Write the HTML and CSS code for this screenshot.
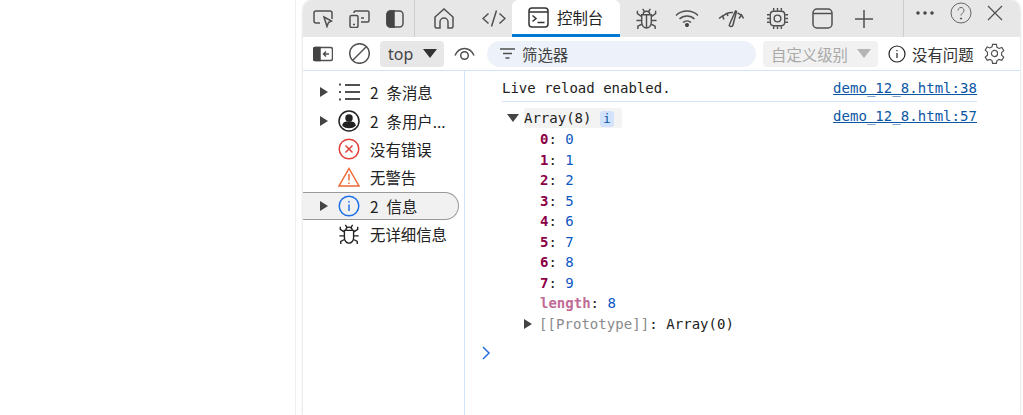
FILE: index.html
```html
<!DOCTYPE html>
<html lang="zh">
<head>
<meta charset="utf-8">
<title>DevTools</title>
<link rel="stylesheet" href="styles.css">
</head>
<body>
<div class="page">
  <aside class="blank"></aside>
  <main class="devtools">
    <header class="tabbar">
      <div class="tabgroup tools">
        <button class="ic"><svg width="20" height="18" viewBox="0 0 20 18"><path d="M7 13H3a2 2 0 0 1-2-2V3a2 2 0 0 1 2-2h14a2 2 0 0 1 2 2v6"/><path d="M11 7l7.500 4-3 1.500-1.500 4z"/></svg></button>
        <button class="ic"><svg width="21" height="18" viewBox="0 0 21 18"><rect x="1" y="5.500" width="8" height="12" rx="1.500"/><path d="M4 14.500h2"/><path d="M5 3V2.500A1.500 1.500 0 0 1 6.500 1h12A1.500 1.500 0 0 1 20 2.500v8a1.500 1.500 0 0 1-1.500 1.500H12M12 8h3"/></svg></button>
        <button class="ic"><svg width="18" height="18" viewBox="0 0 18 18"><rect x="1" y="1" width="16" height="16" rx="3.500"/><path class="solid" d="M4.500 1H8v16H4.500A3.500 3.500 0 0 1 1 13.500v-9A3.500 3.500 0 0 1 4.500 1z"/></svg></button>
      </div>
      <div class="tabgroup tabs">
        <button class="ic home"><svg width="20" height="21" viewBox="0 0 20 21"><path d="M1 9l9-8 9 8v9.500a1.500 1.500 0 0 1-1.500 1.500H14v-6a4 4 0 0 0-8 0v6H2.500A1.500 1.500 0 0 1 1 18.500z"/></svg></button>
        <button class="ic code"><svg width="24" height="17" viewBox="0 0 24 17"><path d="M6.500 3.500L1 8.500l5.500 5M17.500 3.500l5.500 5-5.500 5M14.500 .5l-5 16"/></svg></button>
        <button class="tab"><svg width="21" height="21" viewBox="0 0 21 21"><rect x="1" y="1" width="19" height="19" rx="3"/><path d="M1 5h19M4.500 8.500L8 11.500l-3.500 3M9.500 15.500h7"/></svg><span>控制台</span></button>
        <button class="ic bug"><svg width="23" height="23" viewBox="0 0 24 24"><path d="M7 8h10v8a5 6 0 0 1-10 0zM8.500 8a3.500 3.500 0 0 1 7 0M12 8v14M8 2l2 3M16 2l-2 3M7 10L2.500 7V4M17 10l4.500-3V4M7 14H1.500M17 14h5.500M7 18l-4 2v3M17 18l4 2v3"/></svg></button>
        <button class="ic wifi"><svg width="24" height="17" viewBox="0 0 24 17"><path d="M1 5.500a16 16 0 0 1 22 0M4.500 9a11 11 0 0 1 15 0M8 12.500a6 6 0 0 1 8 0"/><circle class="solid" cx="12" cy="15" r="1.300"/></svg></button>
        <button class="ic perf"><svg width="26" height="18" viewBox="0 0 26 18"><path d="M1 8.500L4.500 6l1.500 3.500M4.500 6.500A13 13 0 0 1 15 2.500M21 8.500l2.500-3.500 2 3.500M23.500 5.500a13 13 0 0 0-4-2.500M9 3.500l1 2.500M13 16.500c-1.500 0-2-1-1.500-2L17.500 1l1 .5-3.500 13.500c-.2 1-1 1.500-2 1.500z"/></svg></button>
        <button class="ic chip"><svg width="23" height="23" viewBox="0 0 24 24"><rect x="4.500" y="4.500" width="15" height="15" rx="3.500"/><circle cx="12" cy="12" r="3.500"/><path d="M8 1v3M12 1v3M16 1v3M8 20v3M12 20v3M16 20v3M1 8h3M1 12h3M1 16h3M20 8h3M20 12h3M20 16h3"/></svg></button>
        <button class="ic app"><svg width="21" height="21" viewBox="0 0 21 21"><rect x="1" y="1" width="19" height="19" rx="4"/><path d="M1 5.500h19"/></svg></button>
        <button class="ic plus"><svg width="18" height="18" viewBox="0 0 18 18"><path d="M9 0v18M0 9h18"/></svg></button>
      </div>
      <div class="tabgroup end">
        <svg class="dots" width="18" height="4" viewBox="0 0 18 4"><circle class="solid" cx="2" cy="2" r="1"/><circle class="solid" cx="9" cy="2" r="1"/><circle class="solid" cx="16" cy="2" r="1"/></svg>
        <button class="ic help"><svg width="22" height="22" viewBox="0 0 22 22"><circle cx="11" cy="11" r="10"/><path d="M8 8.500a3 3 0 1 1 4.500 2.600c-1 .6-1.500 1.200-1.500 2.400"/><circle class="solid" cx="11" cy="16.500" r=".6"/></svg></button>
        <button class="ic close"><svg width="16" height="16" viewBox="0 0 16 16"><path d="M1 1l14 14M15 1L1 15"/></svg></button>
      </div>
    </header>
    <div class="toolbar">
      <button class="ic"><svg width="20" height="16" viewBox="0 0 20 16"><rect x=".5" y="1.500" width="19" height="13" rx="2"/><path class="solid" d="M2.500 1.500H7v13H2.500a2 2 0 0 1-2-2v-9a2 2 0 0 1 2-2z"/><path d="M16 8h-5M13 5.500L10.500 8l2.500 2.500"/></svg></button>
      <button class="ic stop"><svg width="21" height="21" viewBox="0 0 21 21"><circle cx="10.500" cy="10.500" r="9.800"/><path d="M3.500 17.500l14-14"/></svg></button>
      <button class="select"><span>top</span><i class="caret"></i></button>
      <button class="ic eye"><svg width="21" height="14" viewBox="0 0 21 14"><path d="M1 8.500C3 4 6.500 1.500 10.500 1.500S18 4 20 8.500"/><circle cx="10.500" cy="8.500" r="3.800"/></svg></button>
      <div class="filter"><svg width="15" height="11" viewBox="0 0 15 11"><path d="M0 1h15M3 5.500h9M5.500 10h4"/></svg><span>筛选器</span></div>
      <button class="select level"><span>自定义级别</span><i class="caret"></i></button>
      <div class="issues"><svg width="18" height="18" viewBox="0 0 18 18"><circle cx="9" cy="9" r="8"/><path d="M9 8v5M9 5v1.200"/></svg><span>没有问题</span></div>
      <button class="ic gear"><svg width="21" height="21" viewBox="0 0 22 22"><path d="M9 1.500h4l.6 3 2.200 1.200 2.900-1 2 3.400-2.300 2v2.700l2.300 2-2 3.400-2.900-1-2.200 1.200-.6 3H9l-.6-3-2.200-1.200-2.900 1-2-3.400 2.300-2V9.600l-2.300-2 2-3.400 2.900 1 2.200-1.200z"/><circle cx="11" cy="11" r="3.200"/></svg></button>
    </div>
    <div class="body">
      <nav class="side">
        <div class="row"><i class="arrow"></i><svg width="22" height="20" viewBox="0 0 22 20"><path d="M7 3h15M7 10h15M7 17h15" class="thick"/><path d="M1 2.500h2M1 10h2M1 17.500h2" class="thick"/></svg><span>2 条消息</span></div>
        <div class="row"><i class="arrow"></i><svg class="dark" width="22" height="22" viewBox="0 0 22 22"><circle cx="11" cy="11" r="10"/><circle class="solid" cx="11" cy="8" r="3"/><path class="solid" d="M5 15.500c0-2.500 3-3.500 6-3.500s6 1 6 3.500c-1.500 1.500-3.500 2-6 2s-4.500-.5-6-2z"/></svg><span>2 条用户...</span></div>
        <div class="row"><svg class="red" width="22" height="22" viewBox="0 0 22 22"><circle cx="11" cy="11" r="9.800"/><path d="M7.500 7.500l7 7M14.500 7.500l-7 7"/></svg><span>没有错误</span></div>
        <div class="row"><svg class="orange" width="22" height="20" viewBox="0 0 22 20"><path d="M11 1.500L21 19H1z"/><path d="M11 7v6.500M11 15.500v1.500"/></svg><span>无警告</span></div>
        <div class="row active"><i class="arrow"></i><svg class="blue" width="22" height="22" viewBox="0 0 22 22"><circle cx="11" cy="11" r="9.800"/><path d="M11 9.500V16M11 6v1.500"/></svg><span>2 信息</span></div>
        <div class="row"><svg class="dark" width="22" height="22" viewBox="0 0 24 24"><path d="M7 8h10v8a5 6 0 0 1-10 0zM8.500 8a3.500 3.500 0 0 1 7 0M8 2l2 3M16 2l-2 3M7 10L2.500 7V4M17 10l4.500-3V4M7 14H1.500M17 14h5.500M7 18l-4 2v3M17 18l4 2v3"/></svg><span>无详细信息</span></div>
      </nav>
      <section class="console">
        <div class="msg first"><span>Live reload enabled.</span><a href="#">demo_12_8.html:38</a></div>
        <div class="msg"><div class="head"><i class="arrow down"></i><span class="obj">Array(8) <b class="badge">i</b></span></div><a href="#">demo_12_8.html:57</a></div>
        <div class="props">
          <div><b>0</b>: <em>0</em></div>
          <div><b>1</b>: <em>1</em></div>
          <div><b>2</b>: <em>2</em></div>
          <div><b>3</b>: <em>5</em></div>
          <div><b>4</b>: <em>6</em></div>
          <div><b>5</b>: <em>7</em></div>
          <div><b>6</b>: <em>8</em></div>
          <div><b>7</b>: <em>9</em></div>
          <div><b class="dim">length</b>: <em>8</em></div>
          <div class="proto"><i class="arrow"></i><span class="gray">[[Prototype]]</span>: Array(0)</div>
        </div>
        <svg class="prompt" width="10" height="14" viewBox="0 0 10 14"><path d="M2 1l6 6-6 6"/></svg>
      </section>
    </div>
  </main>
</div>
</body>
</html>
```
FILE: styles.css
```css
* { box-sizing: border-box; }
html, body { margin: 0; height: 100%; background: #fff; overflow: hidden; }
body { font-family: "Noto Sans CJK SC", "Noto Sans", sans-serif; color: #1f1f1f; }
.page { display: flex; height: 415px; width: 1023px; }
.blank { width: 296px; flex: none; border-right: 1px solid #eee; }
.devtools { width: 717px; flex: none; margin-left: 7px; display: flex; flex-direction: column; box-shadow: 0 0 3px rgba(0,0,0,.2); border-radius: 10px 10px 0 0; overflow: hidden; }
button { background: none; border: 0; padding: 0; margin: 0; font: inherit; color: inherit; display: flex; align-items: center; justify-content: center; }
svg { fill: none; stroke: #505050; stroke-width: 1.500; flex: none; display: block; }
svg .solid { fill: #444; stroke: #444; }
.tabbar { height: 37px; background: #e7e7e7; display: flex; }
.tabgroup { display: flex; align-items: center; height: 37px; }
.tools { width: 111px; flex: none; gap: 16px; padding-left: 10px; }
.tabs { width: 489px; flex: none; border-left: 1px solid #ccc; }
.home { width: 57px; }
.code { width: 40px; padding-left: 3px; }
.tab { width: 108px; height: 37px; background: #fff; border-bottom: 3px solid #0078d4; border-radius: 6px 6px 0 0; justify-content: flex-start; padding-left: 16px; gap: 8px; font-size: 15.400px; color: #222; }
.tab svg { stroke: #333; }
.bug { width: 53px; }
.wifi { width: 27px; }
.perf { width: 62px; }
.chip { width: 31px; }
.app { width: 58px; }
.plus { width: 26px; }
.end { flex: 1; border-left: 1px solid #ccc; padding: 0 0 11px 12px; }
.help { margin-left: 16px; }
.help svg { stroke: #666; stroke-width: 1; }
.close { margin-left: 15px; }
.close svg { stroke-width: 1.200; }
.toolbar { height: 34px; flex: none; display: flex; align-items: center; background: #fff; border-bottom: 1px solid #d3e3fd; padding-left: 10px; font-size: 15.400px; }
.stop { margin-left: 16px; }
.select { margin-left: 10px; width: 64px; height: 26px; background: #e7e7e7; border-radius: 4px; justify-content: flex-start; padding-left: 8px; gap: 10px; color: #444; font-family: "Noto Sans", sans-serif; font-size: 16px; }
.caret { width: 0; height: 0; border-left: 7px solid transparent; border-right: 7px solid transparent; border-top: 9px solid #333; }
.eye { margin-left: 10px; }
.filter { margin-left: 12px; width: 269px; height: 26px; background: #edf2fa; border-radius: 13px; display: flex; align-items: center; padding-left: 13px; gap: 7px; color: #444; }
.level { margin-left: 7px; width: 115px; background: #f1f1f1; color: #a9a9a9; font-family: inherit; font-size: 15.400px; gap: 9px; }
.level .caret { border-top-color: #b5b5b5; }
.issues { display: flex; align-items: center; gap: 6px; margin-left: 10px; color: #333; }
.issues svg { stroke: #222; stroke-width: 1.200; }
.gear { margin-left: 10px; }
.gear svg { stroke-width: 1.200; }
.body { flex: 1; display: flex; min-height: 0; background: #fff; }
.side { width: 162px; flex: none; border-right: 1px solid #d3e3fd; padding-top: 7px; font-size: 15.400px; }
.row { height: 28.400px; display: flex; align-items: center; position: relative; padding-left: 35px; margin-right: 5px; }
.row > svg { position: absolute; left: 35px; }
.row > span { margin-left: 32px; white-space: nowrap; color: #222; word-spacing: 4.500px; }
.row .arrow { position: absolute; left: 17px; }
.active { background: #f1f1f1; border: 1px solid #999; border-left: 0; border-radius: 0 14px 14px 0; }
.arrow { display: inline-block; width: 0; height: 0; border-top: 5.500px solid transparent; border-bottom: 5.500px solid transparent; border-left: 8px solid #444; }
.arrow.down { border-left: 6px solid transparent; border-right: 6px solid transparent; border-top: 8px solid #444; border-bottom: 0; }
.red { stroke: #e0413a; }
.orange { stroke: #ed6a36; }
.blue { stroke: #1f73e8; }
.dark { stroke: #222; }
.dark .solid { fill: #222; stroke: #222; }
.thick { stroke-width: 2; }
.console { flex: 1; min-width: 0; padding: 7px 43px 0 37px; font-family: "DejaVu Sans Mono", monospace; font-size: 14px; line-height: 20px; color: #222; }
.msg { display: flex; justify-content: space-between; align-items: flex-start; }
.msg.first { border-bottom: 1px solid #d3e3fd; height: 24px; margin-bottom: 4px; }
.console a { color: #0b57a4; text-decoration: underline; letter-spacing: .04px; }
.head { display: flex; align-items: center; padding-left: 5px; height: 20px; gap: 5px; margin-top: 2px; }
.obj { background: #f3f3f3; border-radius: 3px; line-height: 20px; }
.badge { display: inline-block; font-weight: 400; background: #d3e3fd; border-radius: 3px; width: 14px; text-align: center; color: #0b57a4; font-size: 13px; margin-right: 8px; line-height: 16px; }
.props { padding-left: 38px; margin-top: 1px; line-height: 20.500px; }
.props b { color: #8b0046; font-weight: 700; }
.props b.dim { color: #c06b96; }
.props em { font-style: normal; color: #0b57c4; }
.proto { margin-left: -16px; display: flex; align-items: center; white-space: pre; letter-spacing: .05px; }
.proto .arrow { margin: 0 7px 0 0; }
.gray { color: #8a8a8a; }
.prompt { margin: 12px 0 0 -21px; stroke: #2a6fe0; }
```
